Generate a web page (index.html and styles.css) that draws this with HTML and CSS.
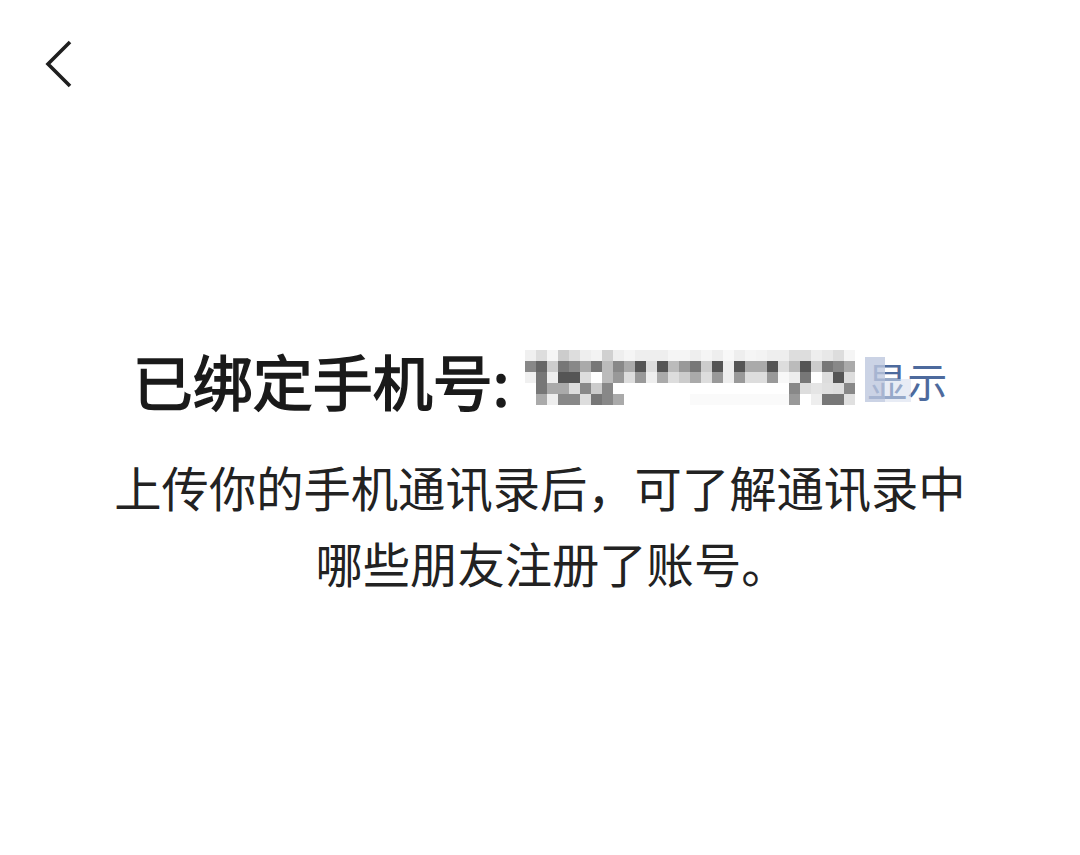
FILE: index.html
```html
<!DOCTYPE html>
<html lang="zh-CN">
<head>
<meta charset="utf-8">
<title>通讯录</title>
<link rel="stylesheet" href="styles.css">
</head>
<body>
<header class="topbar">
  <svg class="back" width="32" height="50" viewBox="0 0 32 50" aria-label="返回">
    <polyline points="26,2 4,24 26,46" fill="none" stroke="#1f1f1f" stroke-width="3.6" stroke-linecap="butt" stroke-linejoin="miter"/>
  </svg>
</header>
<main class="content">
  <div class="title-row">
    <h1 class="title">已绑定手机号:</h1>
    <svg class="mosaic" width="330" height="55" viewBox="0 0 330 55" aria-label="182******73">
      <g id="r0">
        <rect x="0" y="0" width="11" height="11" fill="#f0f0f0"/><rect x="11" y="0" width="11" height="11" fill="#dddddd"/><rect x="22" y="0" width="11" height="11" fill="#f5f5f5"/><rect x="33" y="0" width="11" height="11" fill="#cccccc"/><rect x="44" y="0" width="11" height="11" fill="#dddddd"/><rect x="55" y="0" width="11" height="11" fill="#eeeeee"/><rect x="66" y="0" width="11" height="11" fill="#f3f3f3"/><rect x="77" y="0" width="11" height="11" fill="#d0d0d0"/><rect x="88" y="0" width="11" height="11" fill="#eeeeee"/><rect x="99" y="0" width="11" height="11" fill="#f5f5f5"/><rect x="110" y="0" width="11" height="11" fill="#eeeeee"/><rect x="121" y="0" width="11" height="11" fill="#eeeeee"/><rect x="132" y="0" width="11" height="11" fill="#eeeeee"/><rect x="143" y="0" width="11" height="11" fill="#f5f5f5"/><rect x="154" y="0" width="11" height="11" fill="#f5f5f5"/><rect x="165" y="0" width="11" height="11" fill="#eeeeee"/><rect x="176" y="0" width="11" height="11" fill="#f5f5f5"/><rect x="187" y="0" width="11" height="11" fill="#eeeeee"/><rect x="198" y="0" width="11" height="11" fill="#f8f8f8"/><rect x="209" y="0" width="11" height="11" fill="#eeeeee"/><rect x="220" y="0" width="11" height="11" fill="#f5f5f5"/><rect x="231" y="0" width="11" height="11" fill="#f3f3f3"/><rect x="242" y="0" width="11" height="11" fill="#eeeeee"/><rect x="253" y="0" width="11" height="11" fill="#eeeeee"/><rect x="264" y="0" width="11" height="11" fill="#dddddd"/><rect x="275" y="0" width="11" height="11" fill="#dddddd"/><rect x="286" y="0" width="11" height="11" fill="#eeeeee"/><rect x="297" y="0" width="11" height="11" fill="#e8e8e8"/><rect x="308" y="0" width="11" height="11" fill="#dddddd"/><rect x="319" y="0" width="11" height="11" fill="#f5f5f5"/>
      </g>
      <g id="r1">
        <rect x="0" y="11" width="11" height="11" fill="#888888"/><rect x="11" y="11" width="11" height="11" fill="#666666"/><rect x="22" y="11" width="11" height="11" fill="#cccccc"/><rect x="33" y="11" width="11" height="11" fill="#777777"/><rect x="44" y="11" width="11" height="11" fill="#888888"/><rect x="55" y="11" width="11" height="11" fill="#aaaaaa"/><rect x="66" y="11" width="11" height="11" fill="#777777"/><rect x="77" y="11" width="11" height="11" fill="#bbbbbb"/><rect x="88" y="11" width="11" height="11" fill="#888888"/><rect x="99" y="11" width="11" height="11" fill="#aaaaaa"/><rect x="110" y="11" width="11" height="11" fill="#555555"/><rect x="121" y="11" width="11" height="11" fill="#dddddd"/><rect x="132" y="11" width="11" height="11" fill="#555555"/><rect x="143" y="11" width="11" height="11" fill="#bbbbbb"/><rect x="154" y="11" width="11" height="11" fill="#999999"/><rect x="165" y="11" width="11" height="11" fill="#777777"/><rect x="176" y="11" width="11" height="11" fill="#cccccc"/><rect x="187" y="11" width="11" height="11" fill="#555555"/><rect x="198" y="11" width="11" height="11" fill="#eeeeee"/><rect x="209" y="11" width="11" height="11" fill="#555555"/><rect x="220" y="11" width="11" height="11" fill="#aaaaaa"/><rect x="231" y="11" width="11" height="11" fill="#aaaaaa"/><rect x="242" y="11" width="11" height="11" fill="#555555"/><rect x="253" y="11" width="11" height="11" fill="#dddddd"/><rect x="264" y="11" width="11" height="11" fill="#bbbbbb"/><rect x="275" y="11" width="11" height="11" fill="#555555"/><rect x="286" y="11" width="11" height="11" fill="#cccccc"/><rect x="297" y="11" width="11" height="11" fill="#777777"/><rect x="308" y="11" width="11" height="11" fill="#888888"/><rect x="319" y="11" width="11" height="11" fill="#aaaaaa"/>
      </g>
      <g id="r2">
        <rect x="0" y="22" width="11" height="11" fill="#f0f0f0"/><rect x="11" y="22" width="11" height="11" fill="#777777"/><rect x="22" y="22" width="11" height="11" fill="#eeeeee"/><rect x="33" y="22" width="11" height="11" fill="#555555"/><rect x="44" y="22" width="11" height="11" fill="#555555"/><rect x="55" y="22" width="11" height="11" fill="#dddddd"/><rect x="66" y="22" width="11" height="11" fill="#ffffff"/><rect x="77" y="22" width="11" height="11" fill="#bbbbbb"/><rect x="88" y="22" width="11" height="11" fill="#999999"/><rect x="99" y="22" width="11" height="11" fill="#dddddd"/><rect x="110" y="22" width="11" height="11" fill="#999999"/><rect x="121" y="22" width="11" height="11" fill="#eeeeee"/><rect x="132" y="22" width="11" height="11" fill="#aaaaaa"/><rect x="143" y="22" width="11" height="11" fill="#dddddd"/><rect x="154" y="22" width="11" height="11" fill="#cccccc"/><rect x="165" y="22" width="11" height="11" fill="#aaaaaa"/><rect x="176" y="22" width="11" height="11" fill="#dddddd"/><rect x="187" y="22" width="11" height="11" fill="#999999"/><rect x="198" y="22" width="11" height="11" fill="#eeeeee"/><rect x="209" y="22" width="11" height="11" fill="#999999"/><rect x="220" y="22" width="11" height="11" fill="#dddddd"/><rect x="231" y="22" width="11" height="11" fill="#dddddd"/><rect x="242" y="22" width="11" height="11" fill="#999999"/><rect x="253" y="22" width="11" height="11" fill="#f8f8f8"/><rect x="264" y="22" width="11" height="11" fill="#eeeeee"/><rect x="275" y="22" width="11" height="11" fill="#777777"/><rect x="286" y="22" width="11" height="11" fill="#ffffff"/><rect x="297" y="22" width="11" height="11" fill="#dddddd"/><rect x="308" y="22" width="11" height="11" fill="#555555"/><rect x="319" y="22" width="11" height="11" fill="#dddddd"/>
      </g>
      <g id="r3">
        <rect x="11" y="33" width="11" height="11" fill="#777777"/><rect x="22" y="33" width="11" height="11" fill="#aaaaaa"/><rect x="33" y="33" width="11" height="11" fill="#aaaaaa"/><rect x="44" y="33" width="11" height="11" fill="#dddddd"/><rect x="55" y="33" width="11" height="11" fill="#888888"/><rect x="66" y="33" width="11" height="11" fill="#cccccc"/><rect x="77" y="33" width="11" height="11" fill="#888888"/><rect x="264" y="33" width="11" height="11" fill="#888888"/><rect x="275" y="33" width="11" height="11" fill="#dddddd"/><rect x="286" y="33" width="11" height="11" fill="#e5e5e5"/><rect x="297" y="33" width="11" height="11" fill="#e0e0e0"/><rect x="308" y="33" width="11" height="11" fill="#dddddd"/><rect x="319" y="33" width="11" height="11" fill="#888888"/>
      </g>
      <g id="r4">
        <rect x="11" y="44" width="11" height="11" fill="#aaaaaa"/><rect x="22" y="44" width="11" height="11" fill="#eeeeee"/><rect x="33" y="44" width="11" height="11" fill="#888888"/><rect x="44" y="44" width="11" height="11" fill="#888888"/><rect x="55" y="44" width="11" height="11" fill="#dddddd"/><rect x="66" y="44" width="11" height="11" fill="#777777"/><rect x="77" y="44" width="11" height="11" fill="#888888"/><rect x="88" y="44" width="11" height="11" fill="#aaaaaa"/><rect x="165" y="44" width="99" height="11" fill="#fafafa"/><rect x="264" y="44" width="11" height="11" fill="#999999"/><rect x="286" y="44" width="11" height="11" fill="#eeeeee"/><rect x="297" y="44" width="11" height="11" fill="#777777"/><rect x="308" y="44" width="11" height="11" fill="#777777"/><rect x="319" y="44" width="11" height="11" fill="#e0e0e0"/>
      </g>
    </svg>
    <span class="reveal">显示</span>
  </div>
  <p class="desc"><span class="line">上传你的手机通讯录后，可了解通讯录中</span><span class="line line-last">哪些朋友注册了账号。</span></p>
</main>
</body>
</html>
```

FILE: styles.css
```css
* {
  box-sizing: border-box;
}

html, body {
  margin: 0;
  padding: 0;
  background: #ffffff;
}

body {
  width: 1080px;
  height: 855px;
  overflow: hidden;
  font-family: "Noto Sans CJK SC", "Noto Sans", sans-serif;
  color: #1f1f1f;
}

.topbar {
  height: 120px;
  padding: 40px 0 0 44px;
}

.back {
  display: block;
}

.content {
  display: flex;
  flex-direction: column;
  align-items: center;
  padding-top: 225px;
}

.title-row {
  display: flex;
  align-items: center;
  height: 70px;
}

.title {
  margin: 0;
  font-size: 60px;
  font-weight: 400;
  -webkit-text-stroke: 1.6px #1a1a1a;
  line-height: 70px;
  color: #1a1a1a;
}

.mosaic {
  display: block;
  margin-left: 16px;
  margin-top: -6px;
}

.reveal {
  position: relative;
  margin-left: 12px;
  font-size: 40px;
  line-height: 50px;
  color: #4d6a9d;
}

.reveal::before {
  content: "";
  position: absolute;
  left: -2px;
  top: 2px;
  width: 20px;
  height: 45px;
  background: rgba(190, 200, 222, 0.8);
}

.reveal::after {
  content: "";
  position: absolute;
  left: 18px;
  top: 24px;
  width: 26px;
  height: 23px;
  background: rgba(214, 221, 236, 0.55);
}

.desc {
  display: flex;
  flex-direction: column;
  align-items: center;
  margin: 34px 0 0;
  font-size: 47.3px;
  line-height: 76px;
  color: #222222;
}

.line {
  display: block;
  white-space: nowrap;
}

.line-last {
  padding-left: 24px;
}
```
